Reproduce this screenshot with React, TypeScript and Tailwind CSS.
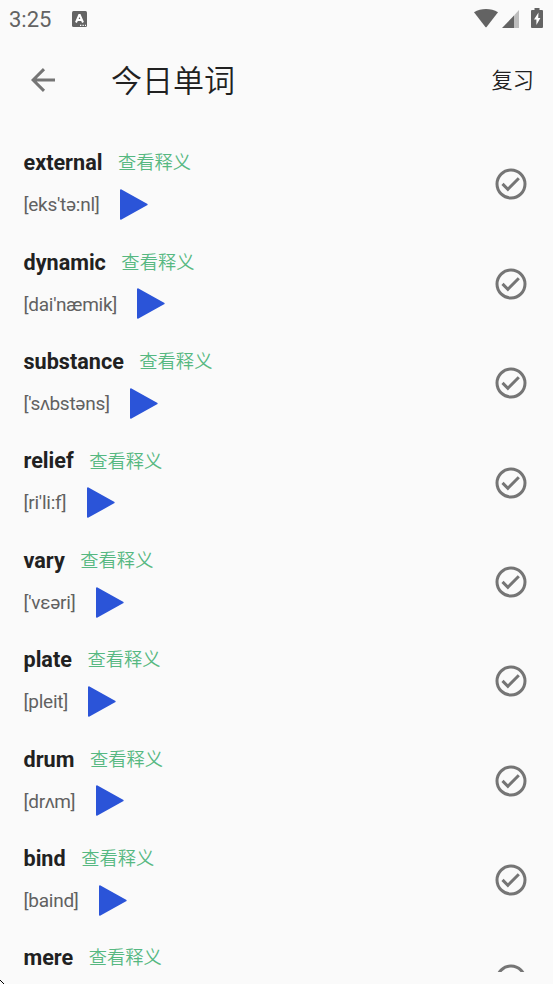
import React from 'react';

const words = [
  { word: 'external', phonetic: "[eks'tə:nl]" },
  { word: 'dynamic', phonetic: "[dai'næmik]" },
  { word: 'substance', phonetic: "['sʌbstəns]" },
  { word: 'relief', phonetic: "[ri'li:f]" },
  { word: 'vary', phonetic: "['vεəri]" },
  { word: 'plate', phonetic: '[pleit]' },
  { word: 'drum', phonetic: '[drʌm]' },
  { word: 'bind', phonetic: '[baind]' },
  { word: 'mere' },
];

const StatusBar = () => (
  <div className="flex h-[38px] shrink-0 items-center pl-[9px] text-[#636363]">
    <span className="w-[63px] pt-0.5 text-[22px] leading-none">3:25</span>
    <svg className="h-4 w-[15px]" viewBox="0 0 15 16">
      <rect width="15" height="16" rx="1.5" fill="currentColor" />
      <path d="M4 11.5L7.2 4h.6L11 11.5M5.3 9h4.4" fill="none" stroke="#fff" strokeWidth="2" />
      <path d="M8 14.3h1.3M10.5 14.3h1.3M13 14.3h1" stroke="#fff" strokeWidth="1.2" />
    </svg>
    <div className="ml-auto flex items-center pr-2.5 pb-0.5">
      <svg className="h-[19px] w-6" viewBox="0 0 24 19">
        <path d="M0 3.2C7-1 17-1 24 3.2L12.6 18q-.6.7-1.2 0z" fill="currentColor" />
      </svg>
      <svg className="ml-1 h-[19px] w-[18px]" viewBox="0 0 18 19">
        <path d="M12 6.5L17 1v18h-5z" fill="#bdbdbd" />
        <path d="M0 19L12 6.5V19z" fill="currentColor" />
      </svg>
      <svg className="ml-[11px] h-5 w-3" viewBox="0 0 12 20">
        <path d="M3.5 0h5v2H11q1 0 1 1v16q0 1-1 1H1q-1 0-1-1V3q0-1 1-1h2.5z" fill="currentColor" />
        <path d="M7.5 4.5L3 11.5h2.4V17L9.4 10H7.2z" fill="#fff" />
      </svg>
    </div>
  </div>
);

const Header = () => (
  <header className="flex h-[84px] shrink-0 items-center pr-[19px] pl-[31px] text-[#212121]">
    <svg className="h-6 w-6" viewBox="0 0 24 24" fill="none" stroke="#757575" strokeWidth="3">
      <path d="M24 12H2.2M13 1.1L2.1 12L13 22.9" />
    </svg>
    <h1 className="ml-14 pt-0.5 text-[31px] leading-none font-[350]">今日单词</h1>
    <button className="ml-auto pt-0.5 text-[21.2px] leading-none font-[350]">复习</button>
  </header>
);

const PlayIcon = () => (
  <svg className="h-[31px] w-7" viewBox="0 0 28 31">
    <path
      d="M1 1.3L26.6 15.5L1 29.7z"
      fill="#2b54d8"
      stroke="#2b54d8"
      strokeWidth="2"
      strokeLinejoin="round"
    />
  </svg>
);

const CheckIcon = () => (
  <svg className="h-8 w-8" viewBox="0 0 32 32" fill="none" stroke="#757575" strokeWidth="3">
    <circle cx="16" cy="16" r="14" />
    <path d="M7.5 15.9L12.9 21.3L23.8 10.3" />
  </svg>
);

const App = () => {
  return (
    <div className="flex h-[984px] w-[553px] flex-col overflow-hidden bg-[#fafafa] font-[Roboto,'Noto_Sans_CJK_SC',sans-serif]">
      <StatusBar />
      <Header />

      <main className="h-[850px] shrink-0 overflow-hidden pt-[12.8px]">
        {words.map((item) => (
          <div key={item.word} className="flex h-[99.4px] items-center justify-between pr-[26px] pl-[23.5px]">
            <div className="flex flex-col pt-px">
              <div className="flex h-[38px] items-center">
                <span className="pt-0.5 text-[21.6px] leading-none font-bold text-[#212121]">{item.word}</span>
                <button className="ml-[15.5px] pt-[3px] text-[18.3px] leading-none font-[350] text-[#56b881]">查看释义</button>
              </div>
              <div className="flex h-[46px] items-center">
                {item.phonetic && (
                  <>
                    <span className="pt-[1.5px] text-[19px] leading-none tracking-[-0.25px] text-[#616161]">{item.phonetic}</span>
                    <button className="ml-[20.3px] pt-px">
                      <PlayIcon />
                    </button>
                  </>
                )}
              </div>
            </div>
            <CheckIcon />
          </div>
        ))}
      </main>

      <svg className="mt-auto h-1 w-1" viewBox="0 0 4 4">
        <path d="M0 0h1v1h1v1h1v1h1v1H3V3H2V2H1V1H0z" fill="#000" />
      </svg>
    </div>
  );
};

export default App;
